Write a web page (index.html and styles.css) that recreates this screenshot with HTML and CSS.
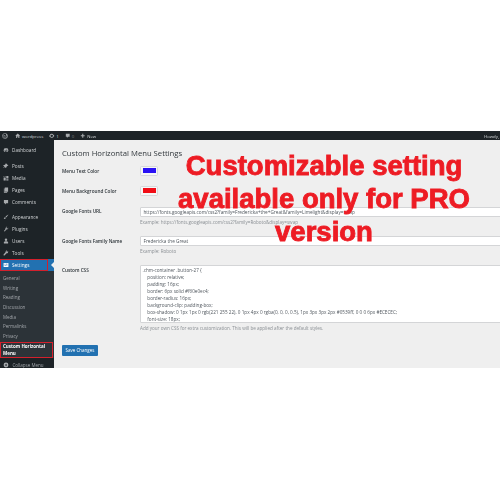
FILE: index.html
```html
<!DOCTYPE html>
<html lang="en">
<head>
<meta charset="utf-8">
<title>Custom Horizontal Menu Settings</title>
<link rel="stylesheet" href="styles.css">
</head>
<body>
<svg class="defs" width="0" height="0" aria-hidden="true">
  <symbol id="i-gauge" viewBox="0 0 20 20"><path d="M10 3a8 8 0 0 0-8 8c0 2 .7 3.800 2 5h12a8 8 0 0 0 2-5 8 8 0 0 0-8-8zm0 2a1 1 0 1 1 0 2 1 1 0 0 1 0-2zM5 10a1 1 0 1 1 0 2 1 1 0 0 1 0-2zm10 0a1 1 0 1 1 0 2 1 1 0 0 1 0-2zm-1-3-3 6a2 2 0 1 1-2-1z"/></symbol>
  <symbol id="i-pin" viewBox="0 0 20 20"><path d="M11 2l7 7-2 1-1-1-4 4 0 3-2 1-3-4-4 4-1 0 0-1 4-4-4-3 1-2 3 0 4-4-1-1z"/></symbol>
  <symbol id="i-media" viewBox="0 0 20 20"><path d="M2 3h7v5H2zM3 4v3h5V4zM11 3h7v9h-7zM2 10h7v8H2zM11 14h7v4h-7z"/></symbol>
  <symbol id="i-pages" viewBox="0 0 20 20"><path d="M6 2h11v14H6zM3 5h2v12h9v2H3z"/></symbol>
  <symbol id="i-comment" viewBox="0 0 20 20"><path d="M3 3h14v11h-6l-4 4v-4H3z"/></symbol>
  <symbol id="i-brush" viewBox="0 0 20 20"><path d="M18 2c-3 1-8 5-10 8l2 2c3-2 7-7 8-10zM7 11c-2 0-3 2-3 3 0 1-1 2-2 2 2 2 6 1 7-3z"/></symbol>
  <symbol id="i-plug" viewBox="0 0 20 20"><path d="M13 2l1 1-3 3 3 3 3-3 1 1-3 4-2 1-2 0-5 6-3-1 5-6 0-3 1-2z"/></symbol>
  <symbol id="i-users" viewBox="0 0 20 20"><circle cx="10" cy="6" r="4"/><path d="M3 18v-3c0-3 3-4 7-4s7 1 7 4v3z"/></symbol>
  <symbol id="i-tools" viewBox="0 0 20 20"><path d="M17 3l-3 3-2-1 0-2 2-1c-3-1-6 1-5 5L2 15c-1 2 1 4 3 3l7-7c3 1 6-2 5-8z"/></symbol>
  <symbol id="i-settings" viewBox="0 0 20 20"><path d="M2 3h16v14H2zM5 6v2h3V6zM10 6v2h5V6zM5 10v2h7v-2zM14 10v2h1v-2z" fill-rule="evenodd"/></symbol>
  <symbol id="i-collapse" viewBox="0 0 20 20"><path d="M10 2a8 8 0 1 0 0 16 8 8 0 0 0 0-16zm2 4v8l-6-4z" fill-rule="evenodd"/></symbol>
  <symbol id="i-wp" viewBox="0 0 20 20"><path d="M10 1a9 9 0 1 0 0 18 9 9 0 0 0 0-18zm0 1.500c2 0 3.700.7 5 2-1.400 0-2 1.500-1 3 1 2 1 3 0 5l-1 3-3-8h1V7H7v.5h1l1 3-2 5-3-8h1V7H3.500A7.500 7.500 0 0 1 10 2.500zM3 8l3.500 9.500A7.500 7.500 0 0 1 3 8zm7 3 2.300 6a7.500 7.500 0 0 1-4.500.2zm6-3a7.500 7.500 0 0 1-2.700 8.900z" fill-rule="evenodd"/></symbol>
  <symbol id="i-home" viewBox="0 0 20 20"><path d="M10 2 1 10h3v8h4v-5h4v5h4v-8h3z"/></symbol>
  <symbol id="i-update" viewBox="0 0 20 20"><path d="M10 3a7 7 0 0 1 6.500 4.500L19 6v7h-6l2-2a5 5 0 0 0-9.500-2L3 7.500A7 7 0 0 1 10 3zM1 14V8h6l-2 2a5 5 0 0 0 9.500 1.500L17 13a7 7 0 0 1-12.500 1.500z"/></symbol>
  <symbol id="i-plus" viewBox="0 0 20 20"><path d="M8 3h4v5h5v4h-5v5H8v-5H3V8h5z"/></symbol>
</svg>

<div class="spacer"></div>
<div class="screen">
  <header class="adminbar">
    <svg class="bar-icon wp"><use href="#i-wp"/></svg>
    <span class="bar-item"><svg class="bar-icon"><use href="#i-home"/></svg>wordpress</span>
    <span class="bar-item"><svg class="bar-icon"><use href="#i-update"/></svg>1</span>
    <span class="bar-item dim"><svg class="bar-icon"><use href="#i-comment"/></svg>0</span>
    <span class="bar-item"><svg class="bar-icon"><use href="#i-plus"/></svg>New</span>
    <span class="howdy">Howdy,</span>
  </header>
  <div class="shell">
    <nav class="sidebar">
      <a class="nav-item gap-after"><svg><use href="#i-gauge"/></svg>Dashboard</a>
      <a class="nav-item"><svg><use href="#i-pin"/></svg>Posts</a>
      <a class="nav-item"><svg><use href="#i-media"/></svg>Media</a>
      <a class="nav-item"><svg><use href="#i-pages"/></svg>Pages</a>
      <a class="nav-item gap-after"><svg><use href="#i-comment"/></svg>Comments</a>
      <a class="nav-item"><svg><use href="#i-brush"/></svg>Appearance</a>
      <a class="nav-item"><svg><use href="#i-plug"/></svg>Plugins</a>
      <a class="nav-item"><svg><use href="#i-users"/></svg>Users</a>
      <a class="nav-item"><svg><use href="#i-tools"/></svg>Tools</a>
      <a class="nav-item current"><svg><use href="#i-settings"/></svg>Settings<span class="mark"></span></a>
      <div class="submenu">
        <a>General</a>
        <a>Writing</a>
        <a>Reading</a>
        <a>Discussion</a>
        <a>Media</a>
        <a>Permalinks</a>
        <a>Privacy</a>
        <a class="sub-current">Custom Horizontal Menu</a>
      </div>
      <a class="nav-item collapse"><svg><use href="#i-collapse"/></svg>Collapse Menu</a>
    </nav>
    <main class="content">
      <h1>Custom Horizontal Menu Settings</h1>
      <div class="form">
        <label class="row-color">Menu Text Color</label>
        <div class="row-color"><span class="swatch"><i class="blue"></i></span></div>
        <label class="row-color">Menu Background Color</label>
        <div class="row-color"><span class="swatch"><i class="red"></i></span></div>
        <label>Google Fonts URL</label>
        <div class="field-url">
          <div class="input">https://fonts.googleapis.com/css2?family=Fredericka+the+Great&amp;family=Limelight&amp;display=swap</div>
          <p class="help">Example: https://fonts.googleapis.com/css2?family=Roboto&amp;display=swap</p>
        </div>
        <label>Google Fonts Family Name</label>
        <div class="field-name">
          <div class="input">Fredericka the Great</div>
          <p class="help">Example: Roboto</p>
        </div>
        <label>Custom CSS</label>
        <div>
          <pre class="textarea">.chm-container .button-27 {
    position: relative;
    padding: 16px;
    border: 6px solid #f60e0ec4;
    border-radius: 16px;
    background-clip: padding-box;
    box-shadow: 0 1px 1px 0 rgb(221 255 22), 0 1px 4px 0 rgba(0, 0, 0, 0.5), 1px 3px 3px 2px #0539ff, 0 0 0 6px #ECECEC;
    font-size: 18px;</pre>
          <p class="help">Add your own CSS for extra customization. This will be applied after the default styles.</p>
        </div>
      </div>
      <button class="save" type="button">Save Changes</button>
      <div class="promo">Customizable setting<br>available only for PRO<br>version</div>
    </main>
  </div>
</div>
</body>
</html>
```

FILE: styles.css
```css
* { box-sizing: border-box; }
html, body { margin: 0; padding: 0; }
body {
  width: 500px;
  height: 500px;
  overflow: hidden;
  background: #fff;
  font-family: "Open Sans", "Liberation Sans", sans-serif;
  color: #2c3338;
}
.defs { position: absolute; }
.spacer { height: 131px; }
.screen { filter: blur(0.35px); height: 237px; display: flex; flex-direction: column; overflow: hidden; }

.adminbar {
  height: 9px;
  flex: none;
  background: #1d2327;
  color: #d5d8da;
  font-size: 4.300px;
  display: flex;
  align-items: center;
  padding: 0 0 0 2px;
  gap: 6px;
}
.bar-item { display: flex; align-items: center; gap: 1.500px; }
.bar-icon { width: 5.500px; height: 5.500px; fill: #a7aaad; flex: none; }
.bar-icon.wp { width: 6px; height: 6px; margin-right: 1px; }
.dim { color: #7d8286; }
.howdy { margin-left: auto; margin-right: 1px; }

.shell { flex: 1; display: flex; min-height: 0; }
.sidebar {
  width: 54px;
  flex: none;
  background: #1d2327;
  color: #cfd2d4;
  font-size: 4.700px;
  display: flex;
  flex-direction: column;
  padding-top: 4px;
}
.nav-item {
  height: 12px;
  flex: none;
  display: flex;
  align-items: center;
  gap: 3.500px;
  padding-left: 2.500px;
  position: relative;
}
.nav-item svg { width: 6px; height: 6px; fill: #a7aaad; flex: none; }
.gap-after { margin-bottom: 3.500px; }
.current {
  background: #2271b1;
  color: #fff;
  margin-top: -.5px;
  outline: 1.200px solid #d3202c;
  outline-offset: -1.200px;
  margin-right: 6px;
  box-shadow: 6px 0 0 #2271b1;
}
.current svg { fill: #fff; }
.mark {
  position: absolute;
  right: -6px;
  top: 3px;
  border: 3px solid transparent;
  border-right-color: #f0f0f1;
  border-left-width: 0;
}
.submenu {
  background: #2c3338;
  color: #a3a7ab;
  font-size: 4.500px;
  display: flex;
  flex-direction: column;
  padding-top: 2.500px;
  flex: none;
}
.submenu a { height: 9.700px; padding-left: 3px; display: flex; align-items: center; flex: none; }
.submenu a.sub-current {
  height: 16px;
  margin-top: 1px;
  color: #fff;
  font-weight: 700;
  line-height: 6.500px;
  border: 1px solid #d3202c;
  margin-right: 1px;
  padding-left: 2px;
}
.collapse { color: #a3a7ab; margin-top: 1.500px; font-size: 4.500px; gap: 4px; }

.content {
  flex: 1;
  min-width: 0;
  position: relative;
  background: #efefef;
  padding: 6.500px 0 0 8px;
  overflow: hidden;
}
h1 {
  margin: 0 0 7px;
  font-size: 7.700px;
  line-height: 12px;
  font-weight: 400;
  color: #30363b;
}
.form {
  display: grid;
  grid-template-columns: 78px 400px;
  font-size: 4.700px;
}
label { font-weight: 600; color: #2c3338; padding-top: 2.500px; line-height: 7px; }
.row-color { height: 20px; }
.swatch {
  display: block;
  width: 18px;
  height: 10px;
  padding: 1.500px;
  background: #f6f7f7;
  border: 1px solid #d7d9db;
  border-radius: 1.500px;
}
.swatch i { display: block; height: 100%; }
.swatch .blue { background: #2a12f4; }
.swatch .red { background: #f10d16; }
.field-url { height: 29px; margin-top: 1px; }
.field-name { height: 29px; }
.input {
  height: 10px;
  background: #fff;
  border: 1px solid #d4d5d7;
  border-radius: 1px;
  padding-left: 2.500px;
  line-height: 8px;
  color: #50575e;
  white-space: nowrap;
}
.help { margin: 2px 0 0; font-size: 4.600px; line-height: 7px; color: #8a8f94; white-space: nowrap; }
.textarea {
  margin: 0;
  height: 58px;
  overflow: hidden;
  background: #fff;
  border: 1px solid #d4d5d7;
  border-radius: 1px;
  padding: 1.500px 0 0 1.500px;
  font: inherit;
  font-size: 4.630px;
  line-height: 7px;
  color: #50575e;
}
.save {
  display: block;
  margin-top: 13px;
  width: 36px;
  height: 11px;
  padding: 0;
  background: #2271b1;
  color: #fff;
  border: 0;
  border-radius: 1px;
  font: inherit;
  font-size: 4.500px;
}
.promo {
  position: absolute;
  top: 9px;
  left: 0;
  width: 100%;
  padding-left: 94px;
  text-align: center;
  white-space: nowrap;
  font-family: "Liberation Sans", sans-serif;
  font-weight: 700;
  font-size: 27.500px;
  line-height: 33px;
  color: #ed1c24;
  -webkit-text-stroke: .9px #ed1c24;
  text-shadow: 0 0 1px #fff;
}
```
